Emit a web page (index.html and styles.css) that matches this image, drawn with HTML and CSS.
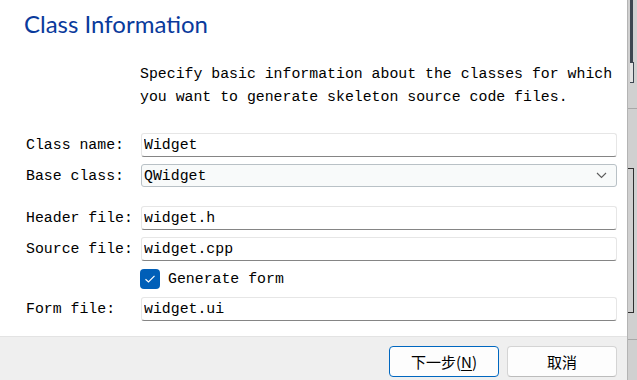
FILE: index.html
```html
<!DOCTYPE html>
<html lang="en">
<head>
    <meta charset="UTF-8">
    <title>Class Information</title>
    <link rel="stylesheet" href="styles.css">
</head>
<body>
    <div class="dialog">
        <div class="page-header">
            <h1 class="page-title">Class Information</h1>
        </div>

        <p class="intro">Specify basic information about the classes for which<br>you want to generate skeleton source code files.</p>

        <div class="form">
            <label class="form-label" for="className">Class name:</label>
            <div class="field"><input id="className" class="line-edit" value="Widget"></div>

            <label class="form-label" for="baseClass">Base class:</label>
            <div class="field">
                <div id="baseClass" class="combo">
                    <span>QWidget</span>
                    <svg class="combo-arrow" width="11" height="7" viewBox="0 0 11 7">
                        <path d="M1 1 L5.5 5.5 L10 1" fill="none" stroke="#5c5c5c" stroke-width="1.1"/>
                    </svg>
                </div>
            </div>

            <div class="spacer"></div>

            <label class="form-label" for="headerFile">Header file:</label>
            <div class="field"><input id="headerFile" class="line-edit" value="widget.h"></div>

            <label class="form-label" for="sourceFile">Source file:</label>
            <div class="field"><input id="sourceFile" class="line-edit" value="widget.cpp"></div>

            <div class="form-label"></div>
            <div class="field check-row">
                <span class="checkbox">
                    <svg width="12" height="10" viewBox="0 0 12 10">
                        <path d="M1.5 5.2 L4.5 8 L10.5 1.8" fill="none" stroke="#fff" stroke-width="1.2"/>
                    </svg>
                </span>
                <span class="check-text">Generate form</span>
            </div>

            <label class="form-label" for="formFile">Form file:</label>
            <div class="field"><input id="formFile" class="line-edit" value="widget.ui"></div>
        </div>

        <div class="footer">
            <button class="btn btn-default">下一步(<u>N</u>)</button>
            <button class="btn">取消</button>
        </div>
    </div>

    <!-- window behind the dialog -->
    <div class="backdrop">
        <span class="bd-bar"></span>
        <span class="bd-box"></span>
        <span class="bd-rule"></span>
        <span class="bd-bracket"></span>
        <span class="bd-rule bd-rule-low"></span>
    </div>
</body>
</html>
```

FILE: styles.css
```css
* {
    margin: 0;
    padding: 0;
    box-sizing: border-box;
}

body {
    width: 637px;
    height: 380px;
    overflow: hidden;
    display: flex;
    background: #d2d2d2;
    font-family: 'Liberation Mono', 'Noto Sans CJK SC', monospace;
    font-size: 14.85px;
    color: #000;
}

.dialog {
    width: 627px;
    height: 380px;
    display: flex;
    flex-direction: column;
    background: #fff;
}

.page-header {
    padding: 9px 0 0 24px;
    height: 63px;
}

.page-title {
    font-family: Lato, 'Noto Sans', sans-serif;
    font-weight: normal;
    font-size: 24px;
    line-height: 30px;
    color: #0a3a9c;
}

.intro {
    margin-left: 140px;
    line-height: 23px;
    height: 46px;
    white-space: nowrap;
}

.form {
    margin-top: 24px;
    padding-left: 26px;
    display: grid;
    grid-template-columns: 115px 476px;
    grid-template-rows: 24px 23px 5px 24px 24px 22px 24px;
    row-gap: 7px;
    align-items: center;
}

.spacer {
    grid-column: 1 / 3;
}

.form-label {
    line-height: 24px;
    white-space: nowrap;
}

.field {
    height: 100%;
}

.line-edit {
    width: 100%;
    height: 100%;
    border: 1px solid #e6e6e6;
    border-bottom-color: #858585;
    border-radius: 3px;
    padding: 0 2px;
    font: inherit;
    color: #000;
    background: #fff;
    outline: none;
}

.combo {
    height: 100%;
    display: flex;
    align-items: center;
    justify-content: space-between;
    padding: 0 9px 0 2px;
    border: 1px solid #b9c1c6;
    border-radius: 3px;
    background: #f8fafa;
}

.check-row {
    display: flex;
    align-items: center;
    gap: 8px;
    margin-left: -1px;
}

.checkbox {
    width: 20px;
    height: 20px;
    border-radius: 4px;
    background: #005fb8;
    display: flex;
    align-items: center;
    justify-content: center;
}

.footer {
    flex: 1;
    margin-top: 15px;
    background: #efefef;
    border-top: 1px solid #e3e3e3;
    display: flex;
    justify-content: flex-end;
    align-items: flex-start;
    gap: 8px;
    padding: 9px 10px 0 0;
}

.btn {
    width: 110px;
    height: 31px;
    border: 1px solid #d4d4d4;
    border-bottom-color: #bcbcbc;
    border-radius: 4px;
    background: #fdfdfd;
    font-family: 'Noto Sans CJK SC', sans-serif;
    font-size: 15px;
    color: #000;
}

.btn u {
    text-underline-offset: 2px;
}

.btn-default {
    border: 1px solid #0067c0;
}

/* the other window peeking out at the right edge */
.backdrop {
    flex: 1;
    position: relative;
    background: #d0d0d0;
    border-left: 1px solid #b4b4b4;
}

.backdrop span {
    position: absolute;
}

.bd-bar {
    left: 2px;
    top: 0;
    width: 3px;
    height: 62px;
    background: #3d4650;
}

.bd-box {
    left: 2px;
    top: 62px;
    width: 4px;
    height: 21px;
    border: 1px solid #3d4650;
    border-left-width: 0;
    background: #e2e2e2;
}

.bd-rule {
    left: 0;
    top: 108px;
    width: 9px;
    height: 1px;
    background: #a8a8a8;
}

.bd-rule-low {
    top: 339px;
}

.bd-bracket {
    left: 0;
    top: 168px;
    width: 6px;
    height: 145px;
    border: 1px solid #2f2f2f;
    border-left: none;
}
```
